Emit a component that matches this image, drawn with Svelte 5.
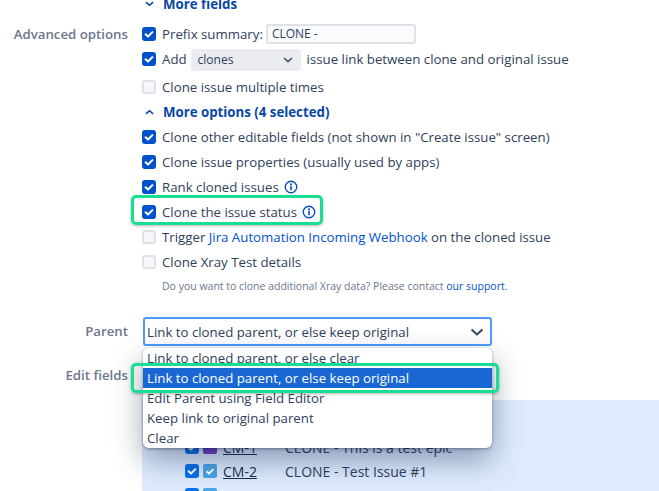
<script>
  const checks = [
    { label: 'Clone other editable fields (not shown in "Create issue" screen)', on: true },
    { label: 'Clone issue properties (usually used by apps)', on: true },
    { label: 'Rank cloned issues', on: true, info: true }
  ];
  const options = [
    'Link to cloned parent, or else clear',
    'Link to cloned parent, or else keep original',
    'Edit Parent using Field Editor',
    'Keep link to original parent',
    'Clear'
  ];
</script>

{#snippet box(on)}
  <span class="box" class:on>
    {#if on}
      <svg viewBox="0 0 14 14" width="14" height="14"><path d="M3.6 7.2l2.4 2.3 4.4-4.4" fill="none" stroke="#fff" stroke-width="2" stroke-linecap="round" stroke-linejoin="round"/></svg>
    {/if}
  </span>
{/snippet}

{#snippet info()}
  <svg class="info" viewBox="0 0 16 16" width="14" height="14"><circle cx="8" cy="8" r="6.6" fill="none" stroke="#0a4fc0" stroke-width="1.5"/><rect x="7.1" y="7" width="1.9" height="4.6" fill="#0a4fc0"/><circle cx="8" cy="5" r="1.2" fill="#0a4fc0"/></svg>
{/snippet}

{#snippet chevron(up)}
  <svg class="chev" viewBox="0 0 10 6" width="9" height="6"><path d={up ? 'M1 5l4-3.4L9 5' : 'M1 1l4 3.4L9 1'} fill="none" stroke="#0747a6" stroke-width="1.8"/></svg>
{/snippet}

<main class="form">
  <div class="field first">
    <div></div>
    <div class="row toggle">{@render chevron(false)}<b>More fields</b></div>
  </div>

  <div class="field advanced">
    <div class="label">Advanced options</div>
    <div class="col">
      <div class="row short">{@render box(true)}<span>Prefix summary:</span><span class="text">CLONE -</span></div>
      <div class="row">{@render box(true)}<span>Add</span><span class="mini">clones<svg viewBox="0 0 10 6" width="10" height="6"><path d="M1 1l4 3.6L9 1" fill="none" stroke="#42526e" stroke-width="1.6"/></svg></span><span>issue link between clone and original issue</span></div>
      <div class="row spaced">{@render box(false)}<span>Clone issue multiple times</span></div>
      <div class="row toggle">{@render chevron(true)}<b>More options (4 selected)</b></div>
      {#each checks as c}
        <div class="row">{@render box(c.on)}<span>{c.label}</span>{#if c.info}{@render info()}{/if}</div>
      {/each}
      <div class="row">
        {@render box(true)}<span>Clone the issue status</span>{@render info()}
        <div class="mark status"></div>
      </div>
      <div class="row">{@render box(false)}<span>Trigger <span class="link">Jira Automation Incoming Webhook</span> on the cloned issue</span></div>
      <div class="row">{@render box(false)}<span>Clone Xray Test details</span></div>
      <div class="note">Do you want to clone additional Xray data? Please contact <span class="link">our support</span>.</div>
    </div>
  </div>

  <div class="field parent">
    <div class="label tall">Parent</div>
    <div class="control">
      <div class="select">
        <span>Link to cloned parent, or else keep original</span>
        <svg viewBox="0 0 14 8" width="14" height="8"><path d="M1.5 1.5L7 6.5l5.5-5" fill="none" stroke="#344563" stroke-width="2"/></svg>
      </div>
      <ul class="menu">
        {#each options as o, i}
          <li class:sel={i === 1}>{o}</li>
        {/each}
      </ul>
      <div class="mark option"></div>
    </div>
  </div>

  <div class="field edit">
    <div class="label">Edit fields</div>
    <div class="panel">
      <div class="issue"><span class="tick">{@render box(true)}</span><span class="type epic"></span><u>CM-1</u><span class="sum">CLONE - This is a test epic</span></div>
      <div class="issue"><span class="tick">{@render box(true)}</span><span class="type task"><svg viewBox="0 0 14 14" width="14" height="14"><path d="M3.6 7.2l2.4 2.3 4.4-4.4" fill="none" stroke="#fff" stroke-width="2"/></svg></span><u>CM-2</u><span class="sum">CLONE - Test Issue #1</span></div>
      <div class="issue"><span class="tick">{@render box(true)}</span><span class="type task"></span></div>
    </div>
  </div>
</main>

<style>
  :global(body) { margin: 0; background: #fff; overflow: hidden; }
  .form {
    width: 659px;
    height: 491px;
    overflow: hidden;
    font-family: "Open Sans", "Noto Sans", sans-serif;
    font-size: 13.25px;
    color: #2f3f5c;
  }
  .field {
    display: grid;
    grid-template-columns: 128px 1fr;
    column-gap: 14px;
  }
  .first { margin-top: -9px; }
  .advanced { margin-top: 6px; }
  .label {
    text-align: right;
    color: #6b778c;
    font-weight: 600;
    line-height: 25px;
    white-space: nowrap;
  }
  .label.tall { line-height: 28px; }
  .col { display: flex; flex-direction: column; }
  .row {
    position: relative;
    display: flex;
    align-items: center;
    gap: 6px;
    height: 25px;
    white-space: nowrap;
  }
  .short { height: 24px; }
  .spaced { margin-top: 3px; }
  .box {
    flex: none;
    display: block;
    width: 14px;
    height: 14px;
    box-sizing: border-box;
    border-radius: 3px;
    background: #f6f7fa;
    border: 2px solid #dfe1e6;
  }
  .box.on { background: #0052cc; border: 0; }
  .box svg { display: block; }
  .info { margin-left: -1px; }
  .toggle { gap: 8px; color: #0747a6; }
  .toggle b { font-weight: 700; }
  .chev { margin: 0 1px 0 3px; }
  .text {
    box-sizing: border-box;
    width: 150px;
    height: 20px;
    margin-left: -3px;
    padding-left: 4px;
    line-height: 16px;
    font-size: 12px;
    border: 2px solid #dfe1e6;
    border-radius: 3px;
    background: #fafbfc;
  }
  .mini {
    display: flex;
    align-items: center;
    justify-content: space-between;
    box-sizing: border-box;
    width: 110px;
    height: 22px;
    margin: 2px 0 0 -2px;
    padding: 0 8px 0 7px;
    font-size: 12px;
    border-radius: 3px;
    background: #ebecf0;
  }
  .link { color: #0052cc; }
  .mark {
    position: absolute;
    box-sizing: border-box;
    border: 3px solid #16df93;
    border-radius: 5px;
    box-shadow: 0 1px 3px rgba(0, 0, 0, 0.3);
  }
  .status { left: -11px; top: -4px; width: 192px; height: 30px; }
  .note { font-size: 10.5px; color: #6b778c; line-height: 24px; padding-left: 20px; white-space: nowrap; }
  .parent { margin-top: 19px; }
  .control { position: relative; z-index: 2; }
  .select {
    box-sizing: border-box;
    display: flex;
    align-items: center;
    justify-content: space-between;
    width: 349px;
    height: 29px;
    margin-left: 1px;
    padding: 0 6px 0 2px;
    border: 2px solid #4c9aff;
    border-radius: 3px;
    background: #fff;
  }
  .menu {
    position: absolute;
    left: 1px;
    top: 31px;
    width: 349px;
    margin: 0;
    padding: 0;
    list-style: none;
    background: #fff;
    border-radius: 6px;
    overflow: hidden;
    box-shadow: 0 1px 3px rgba(9, 30, 66, 0.4), 0 12px 30px rgba(9, 30, 66, 0.4);
  }
  .menu li { height: 20px; line-height: 21px; padding-left: 4px; white-space: nowrap; }
  .menu li.sel { background: #1967d2; color: #fff; }
  .option { left: -11px; top: 46px; width: 368px; height: 30px; }
  .edit { margin-top: 17px; }
  .panel {
    margin-top: 37px;
    height: 110px;
    padding-top: 35px;
    box-sizing: border-box;
    background: #deebff;
  }
  .issue { display: flex; align-items: center; height: 24px; padding-left: 43px; font-size: 14px; }
  .issue .tick { margin-right: 4px; }
  .issue .box.on { background: #0b6fe8; }
  .type { display: block; width: 14px; height: 14px; border-radius: 2px; margin-right: 6px; }
  .epic { background: #6e3fbf; }
  .task { background: #4ba5e6; }
  .type svg { display: block; }
  .issue u { width: 62px; color: #172b4d; }
  .sum { white-space: nowrap; }
</style>
